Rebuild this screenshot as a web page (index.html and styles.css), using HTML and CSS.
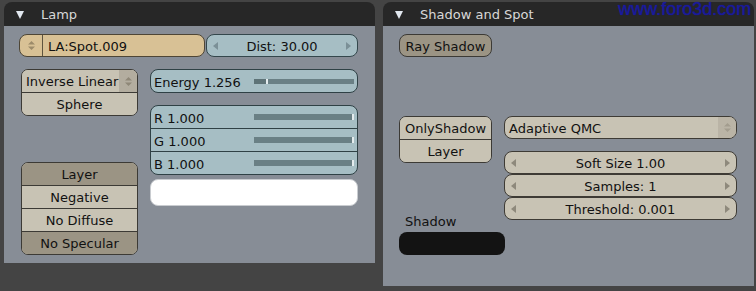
FILE: index.html
```html
<!DOCTYPE html>
<html>
<head>
<meta charset="utf-8">
<link rel="stylesheet" href="styles.css">
</head>
<body>
<div class="screen">
  <section class="panel">
    <header class="panel-head"><span class="tri"></span><span class="title">Lamp</span></header>
    <div class="panel-body lamp-body">
      <div class="row-top">
        <div class="name-btn">
          <span class="name-icon"><svg width="7" height="9" viewBox="0 0 7 9"><path d="M3.5 0 L7 3.5 L0 3.5 Z M0 5.5 L7 5.5 L3.5 9 Z" fill="#9c8b6a"/></svg></span>
          <span class="name-text">LA:Spot.009</span>
        </div>
        <div class="num blue dist">
          <svg class="arr" width="5" height="8" viewBox="0 0 5 8"><path d="M5 0 L5 8 L0 4 Z" fill="#7b9097"/></svg>
          <span class="num-text">Dist: 30.00</span>
          <svg class="arr" width="5" height="8" viewBox="0 0 5 8"><path d="M0 0 L0 8 L5 4 Z" fill="#7b9097"/></svg>
        </div>
      </div>
      <div class="lamp-cols">
        <div class="lamp-left">
          <div class="group">
            <div class="item menu"><span class="menu-text">Inverse Linear</span><span class="menu-arrows"><svg width="7" height="9" viewBox="0 0 7 9"><path d="M3.5 0 L7 3.5 L0 3.5 Z M0 5.5 L7 5.5 L3.5 9 Z" fill="#8f8878"/></svg></span></div>
            <div class="item">Sphere</div>
          </div>
          <div class="group flags">
            <div class="item on">Layer</div>
            <div class="item">Negative</div>
            <div class="item">No Diffuse</div>
            <div class="item on">No Specular</div>
          </div>
        </div>
        <div class="lamp-right">
          <div class="sgroup">
            <div class="srow"><span class="slabel">Energy 1.256</span><span class="bar thin"><span class="bar-fill" style="width:12px"></span><span class="tick"></span></span></div>
          </div>
          <div class="sgroup rgb">
            <div class="srow"><span class="slabel">R 1.000</span><span class="bar full"><span class="tick end"></span></span></div>
            <div class="srow"><span class="slabel">G 1.000</span><span class="bar full"><span class="tick end"></span></span></div>
            <div class="srow"><span class="slabel">B 1.000</span><span class="bar full"><span class="tick end"></span></span></div>
          </div>
          <div class="swatch white"></div>
        </div>
      </div>
    </div>
  </section>
  <section class="panel">
    <header class="panel-head"><span class="tri"></span><span class="title">Shadow and Spot</span></header>
    <div class="panel-body shadow-body">
      <div class="ray">Ray Shadow</div>
      <div class="shadow-cols">
        <div class="shadow-left">
          <div class="group">
            <div class="item">OnlyShadow</div>
            <div class="item">Layer</div>
          </div>
          <div class="label">Shadow</div>
          <div class="swatch black"></div>
        </div>
        <div class="shadow-right">
          <div class="drop"><span class="menu-text">Adaptive QMC</span><span class="drop-arrows"><svg width="7" height="9" viewBox="0 0 7 9"><path d="M3.5 0 L7 3.5 L0 3.5 Z M0 5.5 L7 5.5 L3.5 9 Z" fill="#a39d8f"/></svg></span></div>
          <div class="nums">
            <div class="num tan"><svg class="arr" width="5" height="8" viewBox="0 0 5 8"><path d="M5 0 L5 8 L0 4 Z" fill="#8e897c"/></svg><span class="num-text">Soft Size 1.00</span><svg class="arr" width="5" height="8" viewBox="0 0 5 8"><path d="M0 0 L0 8 L5 4 Z" fill="#8e897c"/></svg></div>
            <div class="num tan"><svg class="arr" width="5" height="8" viewBox="0 0 5 8"><path d="M5 0 L5 8 L0 4 Z" fill="#8e897c"/></svg><span class="num-text">Samples: 1</span><svg class="arr" width="5" height="8" viewBox="0 0 5 8"><path d="M0 0 L0 8 L5 4 Z" fill="#8e897c"/></svg></div>
            <div class="num tan"><svg class="arr" width="5" height="8" viewBox="0 0 5 8"><path d="M5 0 L5 8 L0 4 Z" fill="#8e897c"/></svg><span class="num-text">Threshold: 0.001</span><svg class="arr" width="5" height="8" viewBox="0 0 5 8"><path d="M0 0 L0 8 L5 4 Z" fill="#8e897c"/></svg></div>
          </div>
        </div>
      </div>
    </div>
  </section>
</div>
<div class="watermark">www.foro3d.com</div>
</body>
</html>
```

FILE: styles.css
```css
* { box-sizing: border-box; }
html, body { margin: 0; padding: 0; }
body {
  background: #444444;
  width: 756px;
  height: 291px;
  overflow: hidden;
  position: relative;
  font-family: "DejaVu Sans", sans-serif;
  font-size: 13px;
  color: #111;
}
.screen {
  display: flex;
  align-items: flex-start;
  gap: 8px;
  padding: 2px 0 0 4px;
}
.panel { width: 371px; }
.panel-head {
  height: 24px;
  background: #272727;
  border-radius: 8px 8px 0 0;
  display: flex;
  align-items: center;
  padding-left: 12px;
  color: #d8d8d8;
}
.tri {
  width: 0;
  height: 0;
  border-left: 4.5px solid transparent;
  border-right: 4.5px solid transparent;
  border-top: 8px solid #e2e8ef;
  margin-top: 2px;
}
.title { margin-left: 17px; line-height: 16px; margin-top: 2px; }
.panel-body { background: #878d96; }
.lamp-body { height: 237px; padding: 8px 0 0 15px; }
.shadow-body { height: 260px; padding: 8px 0 0 16px; }

.row-top { display: flex; gap: 1px; }
.name-btn {
  width: 186px;
  height: 23px;
  background: #d8c195;
  border: 1px solid #4e4636;
  border-radius: 8px;
  display: flex;
  align-items: center;
}
.name-icon {
  width: 23px;
  height: 100%;
  border-right: 1px solid #5e543f;
  display: flex;
  align-items: center;
  justify-content: center;
}
.name-text { padding-left: 5px; padding-top: 1px; }

.num {
  height: 23px;
  border-radius: 8px;
  display: flex;
  align-items: center;
  justify-content: space-between;
  padding: 0 6px;
}
.num.blue { background: #a6bec4; border: 1px solid #34474c; }
.num.tan { background: #c8c3b4; border: 1px solid #3e3b35; }
.dist { width: 152px; }
.num-text { flex: 1; text-align: center; padding-top: 1px; }

.lamp-cols { display: flex; margin-top: 12px; }
.lamp-left { width: 117px; margin-left: 2px; }
.lamp-right { width: 208px; margin-left: 12px; }

.group {
  border: 1px solid #3c3a35;
  border-radius: 7px;
  overflow: hidden;
  background: #c8c3b4;
}
.item {
  height: 22px;
  line-height: 23px;
  text-align: center;
  background: #c8c3b4;
}
.item + .item { border-top: 1px solid #3c3a35; height: 23px; }
.item.on { background: #9b9484; }
.menu { display: flex; text-align: left; }
.menu-text { flex: 1; padding-left: 4px; white-space: nowrap; }
.menu-arrows {
  width: 18px;
  background: #b3ad9f;
  display: flex;
  align-items: center;
  justify-content: center;
}
.flags { margin-top: 46px; }

.sgroup {
  border: 1px solid #2f4145;
  border-radius: 8px;
  overflow: hidden;
  background: #a6bec4;
}
.srow {
  height: 22px;
  display: flex;
  align-items: center;
  padding-left: 3px;
}
.srow + .srow { border-top: 1px solid #2f4145; height: 23px; }
.slabel { width: 100px; padding-top: 2px; }
.bar {
  position: relative;
  width: 100px;
  height: 6px;
  background: #6a8085;
  display: flex;
}
.bar.thin { height: 5px; }
.bar-fill { background: #5e7377; height: 100%; }
.tick { width: 2px; height: 100%; background: #e4ecee; }
.bar.full { justify-content: flex-end; width: 100px; }
.rgb { margin-top: 12px; }
.swatch { border-radius: 8px; }
.swatch.white {
  margin-top: 4px;
  height: 27px;
  background: #ffffff;
  border: 1px solid #c9ccd0;
}

.ray {
  width: 93px;
  height: 23px;
  line-height: 23px;
  text-align: center;
  background: #9b9484;
  border: 1px solid #3c3a35;
  border-radius: 8px;
}
.shadow-cols { display: flex; margin-top: 59px; }
.shadow-left { width: 93px; }
.shadow-right { width: 233px; margin-left: 12px; }
.label {
  margin-top: 51px;
  line-height: 16px;
  padding-left: 6px;
}
.swatch.black {
  margin-top: 2px;
  width: 106px;
  height: 23px;
  background: #131313;
}
.drop {
  height: 23px;
  display: flex;
  align-items: center;
  background: #c8c3b4;
  border: 1px solid #3e3b35;
  border-radius: 8px;
  overflow: hidden;
}
.drop .menu-text { padding-top: 1px; }
.drop-arrows {
  width: 18px;
  height: 100%;
  background: #bab4a6;
  display: flex;
  align-items: center;
  justify-content: center;
}
.nums { margin-top: 12px; }

.watermark {
  position: absolute;
  left: 618px;
  top: 0;
  font-family: "Liberation Sans", Arial, sans-serif;
  font-size: 18px;
  line-height: 18px;
  color: #1a1a9c;
  text-shadow: 0 0 1px #1a1a9c;
  white-space: nowrap;
}
```
